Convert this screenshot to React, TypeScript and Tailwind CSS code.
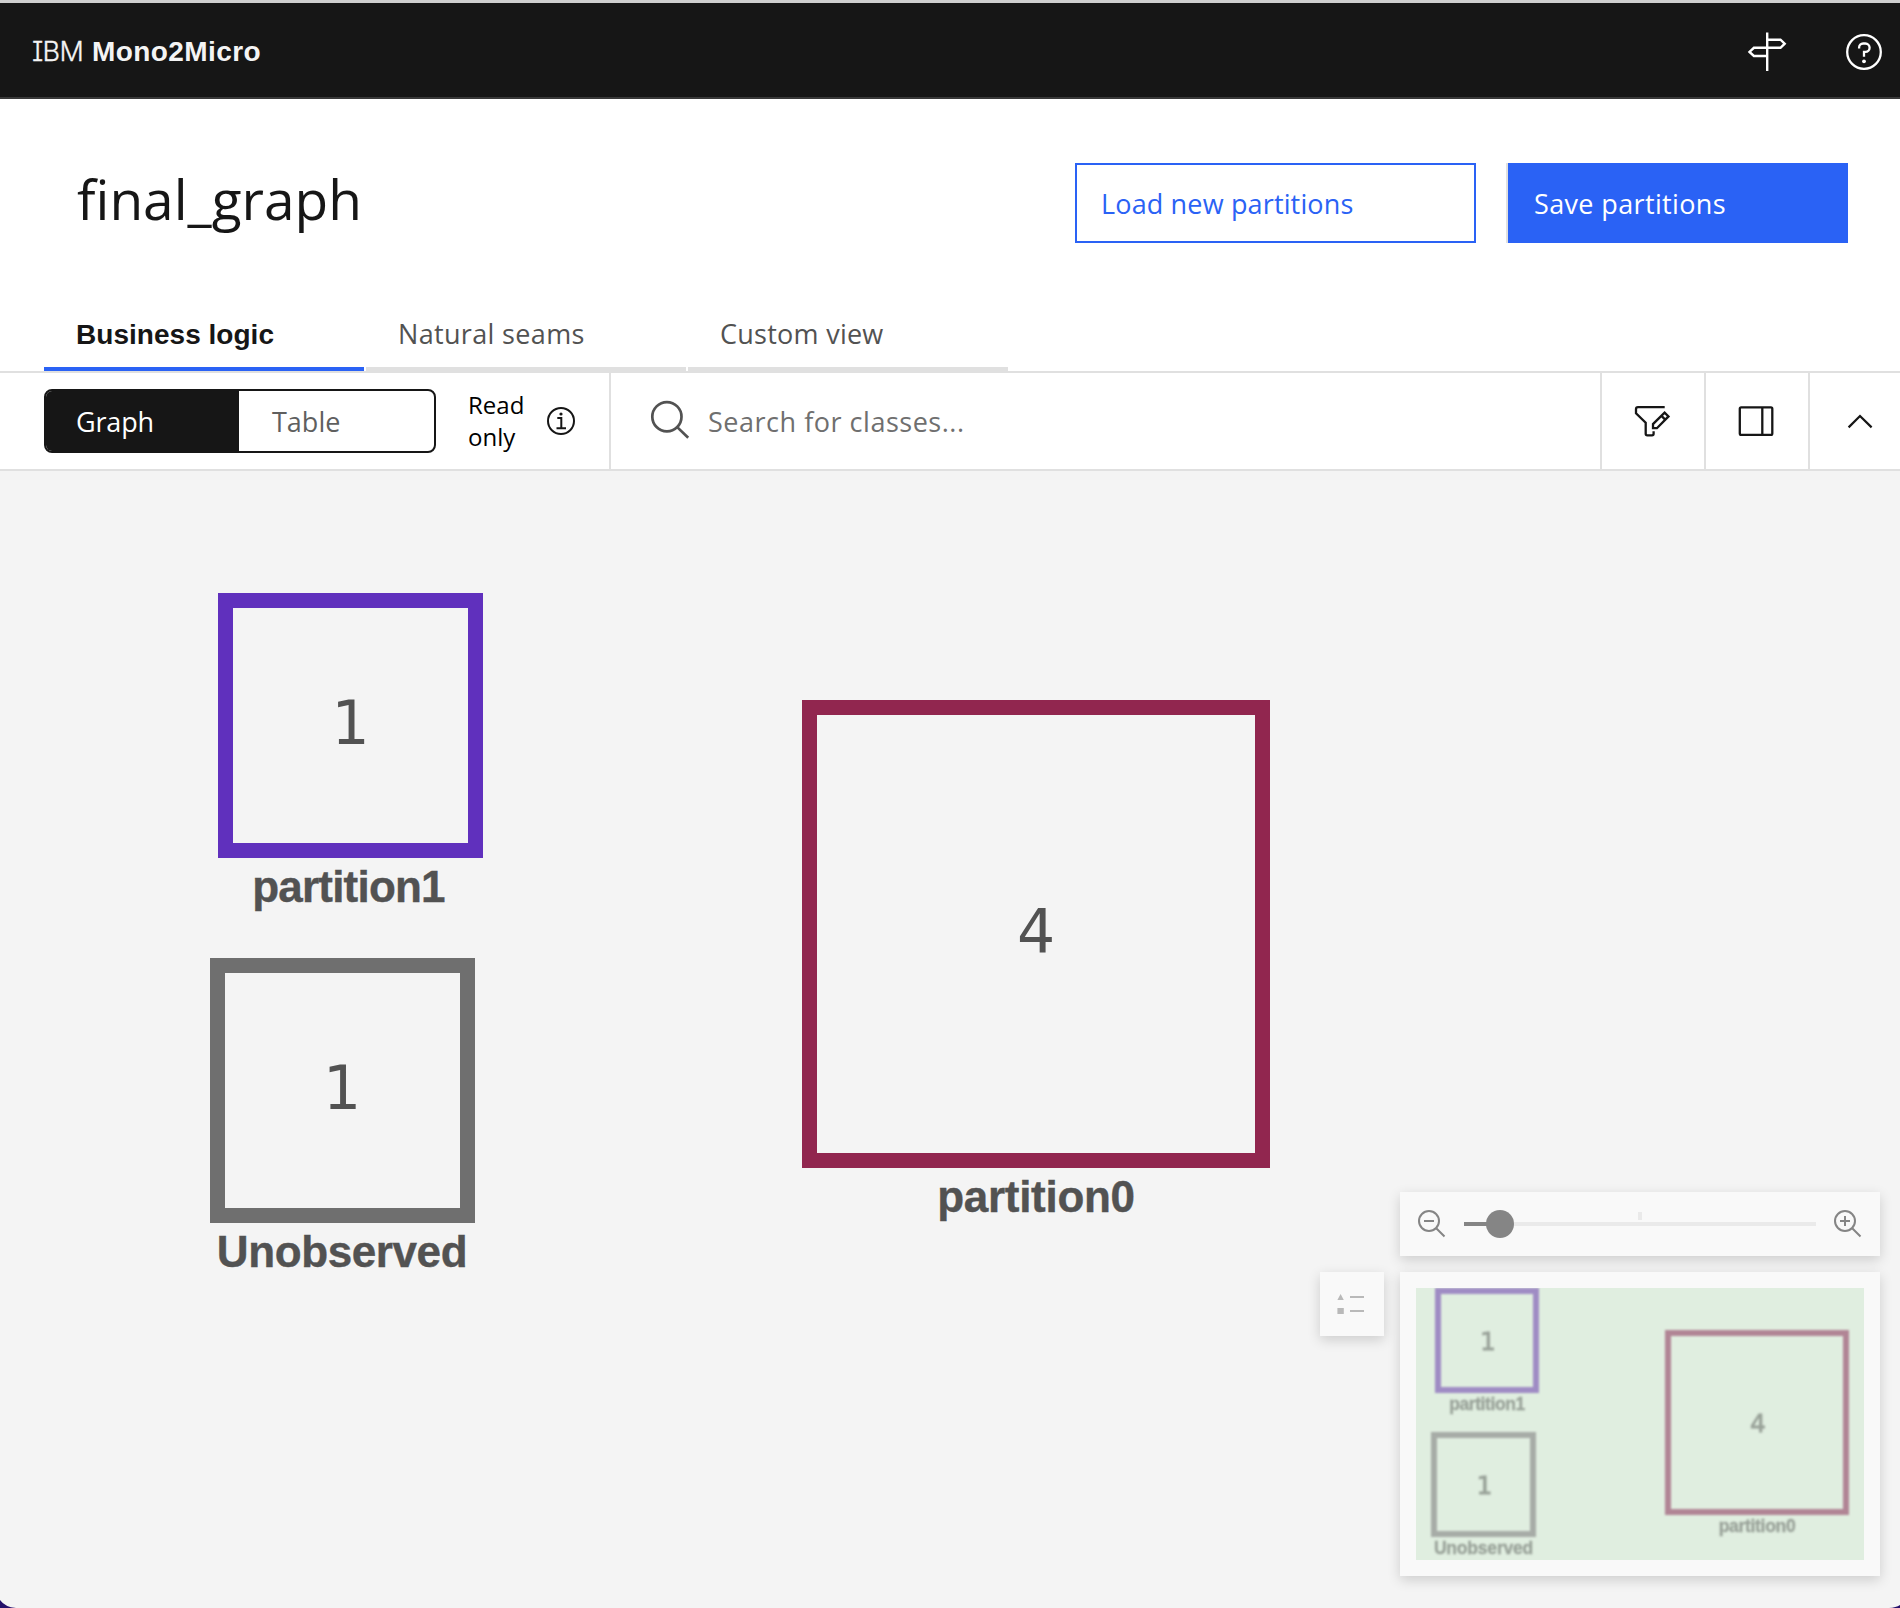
import React from "react";

type PartitionNode = {
  name: string;
  count: number;
  place: string;
  box: string;
  label: string;
};

const graphNodes: PartitionNode[] = [
  {
    name: "partition1",
    count: 1,
    place: "left-[218px] top-[122px] w-[265px]",
    box: "h-[265px] border-[#6030bd]",
    label: "tracking-[-0.8px] -translate-x-[2px]",
  },
  {
    name: "Unobserved",
    count: 1,
    place: "left-[209.5px] top-[487px] w-[265px]",
    box: "h-[265px] border-[#6f6f6f]",
    label: "tracking-[-0.4px]",
  },
  {
    name: "partition0",
    count: 4,
    place: "left-[802px] top-[229px] w-[468px]",
    box: "h-[468px] border-[#91264f]",
    label: "tracking-[-0.3px]",
  },
];

const miniNodes: PartitionNode[] = [
  {
    name: "partition1",
    count: 1,
    place: "left-[19px] top-0 w-[104px]",
    box: "h-[105px] border-[#9f8cc4]",
    label: "tracking-[-0.4px]",
  },
  {
    name: "Unobserved",
    count: 1,
    place: "left-[15px] top-[144px] w-[105px]",
    box: "h-[105px] border-[#a7aca7]",
    label: "tracking-[-0.2px]",
  },
  {
    name: "partition0",
    count: 4,
    place: "left-[249px] top-[42px] w-[184px]",
    box: "h-[185px] border-[#b18595]",
    label: "tracking-[-0.3px]",
  },
];

function SignpostIcon() {
  return (
    <svg width="48" height="48" viewBox="0 0 48 48" fill="none" stroke="#fff" strokeWidth="2.4">
      <path d="M24.2 4.5v38.5M24.2 11.7h13.3l4.2 4-4.2 4.1H10.9L6.5 24l4.4 4h13.3" />
    </svg>
  );
}

function HelpIcon() {
  return (
    <svg width="40" height="40" viewBox="0 0 40 40" fill="none" stroke="#fff" strokeWidth="2.3">
      <circle cx="20" cy="20" r="16.8" />
      <path d="M15.1 16.5v-1a4 4 0 0 1 4-4h2.3a4.2 4.2 0 0 1 0 8.4H20v4.8" />
      <circle cx="20" cy="29.3" r="1.9" fill="#fff" stroke="none" />
    </svg>
  );
}

function InfoIcon() {
  return (
    <svg width="32" height="32" viewBox="0 0 32 32" fill="none" stroke="#161616" strokeWidth="2">
      <circle cx="16" cy="16" r="13" />
      <path d="M12.3 13h4v10M11.5 23.2h9.5" />
      <circle cx="16" cy="9" r="1.6" fill="#161616" stroke="none" />
    </svg>
  );
}

function SearchIcon() {
  return (
    <svg width="44" height="44" viewBox="0 0 44 44" fill="none" stroke="#525252" strokeWidth="2.7">
      <circle cx="19.9" cy="17.7" r="14.6" />
      <path d="M30.2 28.1l11 10.6" />
    </svg>
  );
}

function FilterEditIcon() {
  return (
    <svg width="40" height="40" viewBox="0 0 40 40" fill="none" stroke="#161616" strokeWidth="2.3">
      <path d="M32.7 6.2H6a2 2 0 0 0-2 2v4.1l9.7 9.5v10.9a1.6 1.6 0 0 0 1.6 1.6H20a1.6 1.6 0 0 0 1.6-1.6v-2.5" />
      <path d="M21 27.2v-4.1l11.6-11.5 3.9 3.8-11.6 11.8zM29.2 14.6l4 4" />
    </svg>
  );
}

function SidePanelIcon() {
  return (
    <svg width="40" height="40" viewBox="0 0 40 40" fill="none" stroke="#161616" strokeWidth="2.3">
      <rect x="3.8" y="6.4" width="32.5" height="27.4" rx="1.4" />
      <path d="M26.3 6.4v27.4" />
    </svg>
  );
}

function ChevronUpIcon() {
  return (
    <svg width="40" height="40" viewBox="0 0 40 40" fill="none" stroke="#161616" strokeWidth="2.2">
      <path d="M8.6 26.4L20 15l11.6 11.4" />
    </svg>
  );
}

function ZoomIcon({ plus }: { plus?: boolean }) {
  return (
    <svg width="32" height="32" viewBox="0 0 32 32" fill="none" stroke="#858585" strokeWidth="2">
      <circle cx="13" cy="13" r="10" />
      <path d="M20.2 20.2l8.3 8.3M8 13h10" />
      {plus && <path d="M13 8v10" />}
    </svg>
  );
}

function LegendIcon() {
  return (
    <svg width="32" height="32" viewBox="0 0 32 32" fill="#b9b9b9">
      <path d="M1.4 12h6.4L4.6 6zM1.4 20h6.4v6H1.4zM14 8h14v2H14zM14 22h14v2H14z" />
    </svg>
  );
}

function GraphNode({ node }: { node: PartitionNode }) {
  return (
    <div className={`absolute flex flex-col items-center ${node.place}`}>
      <div className={`flex w-full items-center justify-center border-[15px] pb-1.5 ${node.box}`}>
        <span className="font-['DejaVu_Sans',sans-serif] text-[60px] leading-none">{node.count}</span>
      </div>
      <span
        className={`mt-[7px] text-[44px] font-bold leading-none [-webkit-text-stroke:0.4px_#525252] ${node.label}`}
      >
        {node.name}
      </span>
    </div>
  );
}

function MiniNode({ node }: { node: PartitionNode }) {
  return (
    <div className={`absolute flex flex-col items-center blur-[0.8px] ${node.place}`}>
      <div className={`flex w-full items-center justify-center border-[6px] pl-0.5 pt-px ${node.box}`}>
        <span className="font-['DejaVu_Sans',sans-serif] text-[25px] leading-none [-webkit-text-stroke:0.8px_#98a198]">
          {node.count}
        </span>
      </div>
      <span
        className={`text-[17.5px] font-bold leading-[23px] [-webkit-text-stroke:0.3px_#98a198] ${node.label}`}
      >
        {node.name}
      </span>
    </div>
  );
}

export default function App() {
  return (
    <div className="flex h-[1608px] w-[1900px] flex-col overflow-hidden bg-white font-['Open_Sans',sans-serif] text-[27px] text-[#161616]">
      <header className="flex h-[99px] shrink-0 items-center justify-between border-b-2 border-t-[3px] border-b-[#393939] border-t-[#cfcfcf] bg-[#161616] pl-8 pr-4 pt-[3px] text-[#f4f4f4]">
        <div className="flex items-baseline gap-[9px]">
          <span className="font-['Inter',sans-serif] text-[27px] font-light tracking-[-0.7px] [-webkit-text-stroke:0.3px_#f4f4f4] [font-feature-settings:'cv08']">
            IBM
          </span>
          <span className="font-['Liberation_Sans',sans-serif] text-[28px] font-bold tracking-[0.4px]">
            Mono2Micro
          </span>
        </div>
        <div className="flex items-center gap-[53px]">
          <SignpostIcon />
          <HelpIcon />
        </div>
      </header>

      <section className="flex h-[208px] shrink-0 items-start justify-between pl-[77px] pr-[52px] pt-16">
        <h1 className="text-[55px] leading-[71px]">final_graph</h1>
        <div className="flex gap-[30px]">
          <button className="flex h-20 w-[401px] items-center border-2 border-[#2a62f5] pl-6 pt-0.5 tracking-[0.15px] text-[#2a62f5]">
            Load new partitions
          </button>
          <button className="flex h-20 w-[342px] items-center border-l-2 border-[#e0e0e0] bg-[#2a62f5] bg-clip-padding pl-[26px] pt-0.5 tracking-[0.36px] text-white">
            Save partitions
          </button>
        </div>
      </section>

      <nav className="flex h-16 shrink-0 gap-0.5 pl-11">
        <button className="flex w-80 items-center border-b-4 border-[#2a62f5] pb-[5px] pl-8 font-['Liberation_Sans',sans-serif] text-[28px] font-bold tracking-[0.03px]">
          Business logic
        </button>
        <button className="flex w-80 items-center border-b-4 border-[#e0e0e0] pb-[5px] pl-8 tracking-[0.34px] text-[#525252]">
          Natural seams
        </button>
        <button className="flex w-80 items-center border-b-4 border-[#e0e0e0] pb-[5px] pl-8 tracking-[0.26px] text-[#525252]">
          Custom view
        </button>
      </nav>

      <div className="flex h-[100px] shrink-0 border-y-2 border-[#e0e0e0]">
        <div className="flex w-[611px] items-center border-r-2 border-[#e0e0e0] pl-11">
          <div className="flex h-16 w-[392px] overflow-hidden rounded-lg border-2 border-[#161616]">
            <button className="flex w-[193px] items-center bg-[#161616] pl-[30px] pt-0.5 tracking-[-0.17px] text-white">
              Graph
            </button>
            <button className="flex flex-1 items-center pl-[33px] pt-0.5 text-[#5f5f5f]">Table</button>
          </div>
          <p className="ml-8 w-[66px] text-2xl leading-8 text-black">Read only</p>
          <span className="ml-[11px]">
            <InfoIcon />
          </span>
        </div>
        <div className="flex flex-1 items-center pl-9">
          <SearchIcon />
          <span className="ml-[17px] pt-0.5 tracking-[0.52px] text-[#6f6f6f]">Search for classes...</span>
        </div>
        <button className="flex w-[104px] items-center border-l-2 border-[#e0e0e0] pl-[30px]">
          <FilterEditIcon />
        </button>
        <button className="flex w-[104px] items-center border-l-2 border-[#e0e0e0] pl-[30px]">
          <SidePanelIcon />
        </button>
        <button className="flex w-[92px] items-center border-l-2 border-[#e0e0e0] pl-[30px]">
          <ChevronUpIcon />
        </button>
      </div>

      <main className="relative flex-1 bg-[#f4f4f4] font-['Liberation_Sans',sans-serif] text-[#525252]">
        {graphNodes.map((node) => (
          <GraphNode key={node.name} node={node} />
        ))}

        <div className="absolute bottom-8 right-5 flex items-start gap-4">
          <button className="mt-20 flex size-16 items-center justify-center bg-[#f9f9f9] shadow-[0_4px_12px_rgba(0,0,0,0.16)]">
            <LegendIcon />
          </button>
          <div className="flex w-[480px] flex-col gap-4">
            <div className="flex h-16 items-center justify-between bg-[#f9f9f9] px-4 shadow-[0_4px_12px_rgba(0,0,0,0.16)]">
              <ZoomIcon />
              <div className="relative h-1 w-[352px] bg-[#eaeaea]">
                <div className="h-1 w-9 bg-[#858585]" />
                <div className="absolute -top-3 left-[22px] size-7 rounded-full bg-[#858585]" />
                <div className="absolute -top-2.5 left-[174px] h-2 w-1 bg-[#eaeaea]" />
              </div>
              <ZoomIcon plus />
            </div>
            <div className="h-[304px] bg-[#f9f9f9] p-4 shadow-[0_4px_12px_rgba(0,0,0,0.16)]">
              <div className="relative h-full overflow-hidden bg-[#e0eee0] text-[#98a198]">
                {miniNodes.map((node) => (
                  <MiniNode key={node.name} node={node} />
                ))}
              </div>
            </div>
          </div>
        </div>

        <svg className="absolute bottom-0 left-0" width="18" height="8" viewBox="0 0 18 8" fill="#25106a">
          <path d="M0 0Q5 7 16 8H0z" />
        </svg>
        <svg className="absolute bottom-0 right-0" width="12" height="3" viewBox="0 0 12 3" fill="#25106a">
          <path d="M12 0Q8 2.6 1 3H12z" />
        </svg>
      </main>
    </div>
  );
}
